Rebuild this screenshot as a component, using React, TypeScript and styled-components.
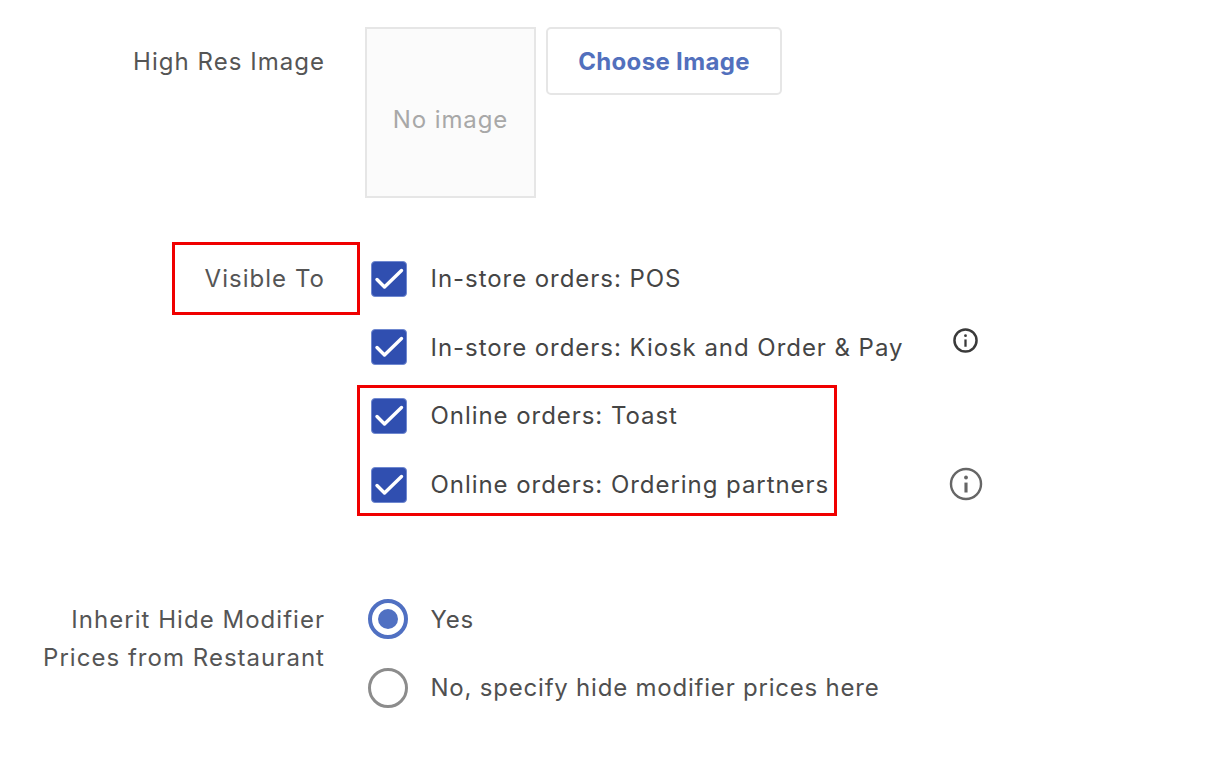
import React from "react";
import styled, { createGlobalStyle } from "styled-components";

const GlobalStyle = createGlobalStyle`
  html, body {
    margin: 0;
    padding: 0;
    background: #fff;
  }
  body {
    font-family: Inter, Roboto, "Liberation Sans", sans-serif;
  }
`;

const Page = styled.div`
  position: relative;
  width: 1215px;
  height: 775px;
  padding-top: 27px;
  box-sizing: border-box;
  overflow: hidden;
`;

const Section = styled.section<{ $top?: number }>`
  display: grid;
  grid-template-columns: 325px 1fr;
  column-gap: 40px;
  margin-top: ${(p) => p.$top ?? 0}px;
`;

const Label = styled.div<{ $pad: number }>`
  padding-top: ${(p) => p.$pad}px;
  text-align: right;
  font-size: 24px;
  line-height: 38px;
  letter-spacing: 1.03px;
  color: #555;
`;

const ImageRow = styled.div`
  display: flex;
  align-items: flex-start;
  gap: 10px;
`;

const ImageBox = styled.div`
  width: 171px;
  height: 171px;
  box-sizing: border-box;
  padding-top: 14px;
  display: flex;
  align-items: center;
  justify-content: center;
  background: #fbfbfb;
  border: 2px solid #e6e6e6;
  color: #a8a8a8;
  font-size: 24px;
  letter-spacing: 0.9px;
`;

const ChooseButton = styled.button`
  width: 236px;
  height: 68px;
  box-sizing: border-box;
  background: #fff;
  border: 2px solid #e6e6e6;
  border-radius: 5px;
  color: #5270bd;
  font-family: Inter, Roboto, "Liberation Sans", sans-serif;
  font-size: 24px;
  font-weight: 700;
  letter-spacing: 0.33px;
`;

const OptionRow = styled.div`
  display: grid;
  grid-template-columns: 60px 503px 64px;
  align-items: center;
  height: 68.6px;
  padding-left: 5.5px;
`;

const OptionText = styled.span`
  font-size: 24px;
  letter-spacing: 0.95px;
  color: #454545;
  white-space: nowrap;
`;

const RadioText = styled(OptionText)`
  letter-spacing: 0.79px;
  color: #505050;
`;

const Checkbox = styled.span`
  width: 36px;
  height: 36px;
  display: flex;
  align-items: center;
  justify-content: center;
  background: #304fb0;
  border: 1px solid #6f88d0;
  box-sizing: border-box;
  border-radius: 4px;
`;

const RadioRow = styled.div`
  display: flex;
  align-items: center;
  height: 68.5px;
  margin-left: 3px;
  gap: 22.5px;
`;

const Radio = styled.span<{ $checked?: boolean }>`
  width: 40px;
  height: 40px;
  box-sizing: border-box;
  border-radius: 50%;
  display: flex;
  align-items: center;
  justify-content: center;
  border: 3px solid ${(p) => (p.$checked ? "#5070c2" : "#8c8c8c")};
  border-width: ${(p) => (p.$checked ? 4 : 3)}px;
  background: #fff;
`;

const RadioDot = styled.span`
  width: 20px;
  height: 20px;
  border-radius: 50%;
  background: #5070c2;
`;

const InfoSlot = styled.span<{ $lift?: number }>`
  display: flex;
  justify-content: center;
  margin-bottom: ${(p) => p.$lift ?? 0}px;
`;

const RedFrame = styled.div<{ $x: number; $y: number; $w: number; $h: number }>`
  position: absolute;
  left: ${(p) => p.$x}px;
  top: ${(p) => p.$y}px;
  width: ${(p) => p.$w}px;
  height: ${(p) => p.$h}px;
  box-sizing: border-box;
  border: 3px solid #f00000;
`;

const CheckMark = () => (
  <svg width="34" height="34" viewBox="0 0 34 34" fill="none">
    <path d="M5 17.5 L12.5 25 L29.5 8.5" stroke="#fff" strokeWidth="3.4" strokeLinecap="round" strokeLinejoin="round" />
  </svg>
);

const InfoIcon = ({ size, color, stroke }: { size: number; color: string; stroke: number }) => (
  <svg width={size} height={size} viewBox="0 0 24 24" fill="none">
    <circle cx="12" cy="12" r="10.6" stroke={color} strokeWidth={stroke} />
    <circle cx="12" cy="7.4" r="1.35" fill={color} />
    <path d="M12 11v7" stroke={color} strokeWidth="2.2" />
  </svg>
);

const options = [
  { text: "In-store orders: POS" },
  { text: "In-store orders: Kiosk and Order & Pay", icon: { size: 25, color: "#3a3a3a", stroke: 2.4 }, lift: 13 },
  { text: "Online orders: Toast" },
  { text: "Online orders: Ordering partners", icon: { size: 34, color: "#666", stroke: 1.7 }, lift: 2 },
];

const App = () => {
  return (
    <Page>
      <GlobalStyle />
      <Section>
        <Label $pad={16}>High Res Image</Label>
        <ImageRow>
          <ImageBox>No image</ImageBox>
          <ChooseButton>Choose Image</ChooseButton>
        </ImageRow>
      </Section>

      <Section $top={46.5}>
        <Label $pad={15}>Visible To</Label>
        <div>
          {options.map((o) => (
            <OptionRow key={o.text}>
              <Checkbox>
                <CheckMark />
              </Checkbox>
              <OptionText>{o.text}</OptionText>
              {o.icon && (
                <InfoSlot $lift={o.lift}>
                  <InfoIcon {...o.icon} />
                </InfoSlot>
              )}
            </OptionRow>
          ))}
        </div>
      </Section>

      <Section $top={66}>
        <Label $pad={16}>
          Inherit Hide Modifier
          <br />
          Prices from Restaurant
        </Label>
        <div>
          <RadioRow>
            <Radio $checked>
              <RadioDot />
            </Radio>
            <RadioText>Yes</RadioText>
          </RadioRow>
          <RadioRow>
            <Radio />
            <RadioText>No, specify hide modifier prices here</RadioText>
          </RadioRow>
        </div>
      </Section>

      <RedFrame $x={172} $y={242} $w={188} $h={73} />
      <RedFrame $x={357} $y={385} $w={480} $h={131} />
    </Page>
  );
};

export default App;
